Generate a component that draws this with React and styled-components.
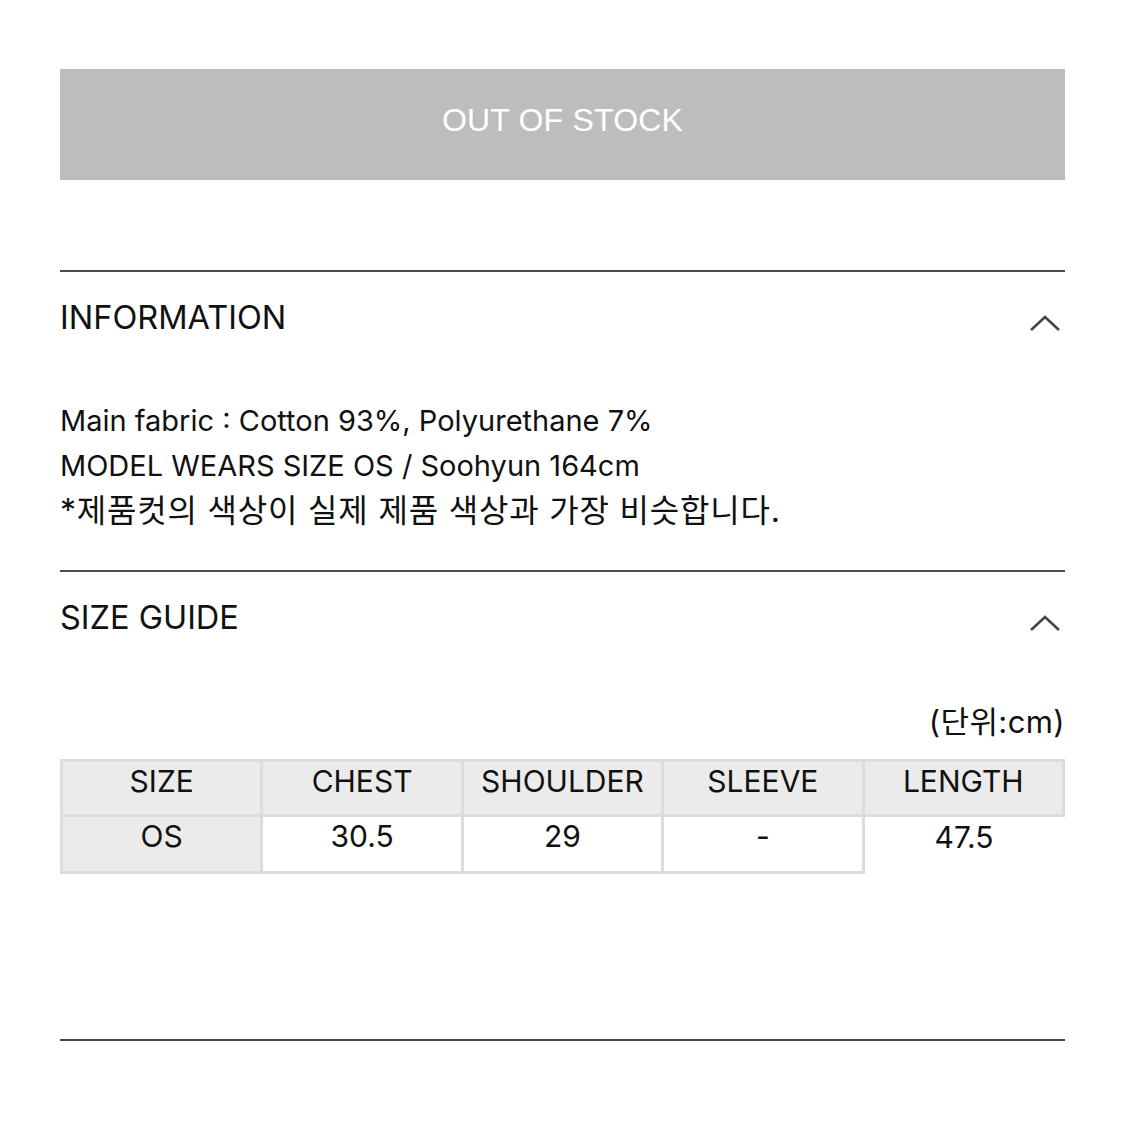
import styled, { createGlobalStyle } from 'styled-components';

const GlobalStyle = createGlobalStyle`
  body {
    margin: 0;
    background: #ffffff;
    font-family: Inter, "Noto Sans CJK KR", sans-serif;
    color: #111111;
  }
`;

const Page = styled.div`
  padding: 69px 60px 60px;
  display: flex;
  flex-direction: column;
`;

const SoldOutButton = styled.button`
  height: 111px;
  padding: 0 0 8px;
  border: none;
  background: #bdbdbd;
  color: #ffffff;
  font-family: "Liberation Sans", Arial, sans-serif;
  font-size: 32px;
  letter-spacing: 0.2px;
  cursor: default;
  margin-bottom: 90px;
`;

const Section = styled.section`
  border-top: 2px solid #4b4b4b;
  padding-top: 26px;
  padding-bottom: ${(p) => p.$bottom || 0}px;
`;

const SectionHead = styled.div`
  display: flex;
  align-items: center;
  justify-content: space-between;
  height: 40px;
`;

const Title = styled.h2`
  margin: 0;
  font-size: 32.5px;
  font-weight: 400;
  line-height: 40px;
  color: #111;
`;

const Chevron = styled.svg`
  width: 32px;
  height: 18px;
  margin-top: 10px;
  margin-right: 4px;
`;

const Info = styled.div`
  margin-top: 60px;
  font-size: 29px;
  line-height: 45px;
  color: #111;
`;

const Korean = styled.span`
  font-size: ${(p) => p.$size || 32}px;
  letter-spacing: ${(p) => p.$spacing ?? 0.8}px;
`;

const Unit = styled.div`
  margin-top: 64px;
  text-align: right;
  font-size: 28px;
  line-height: 40px;
  margin-bottom: 16px;
`;

const SizeTable = styled.table`
  width: 100%;
  table-layout: fixed;
  border-collapse: collapse;
`;

const Cell = styled.td`
  padding: ${(p) => (p.$head ? '1px 0 15px' : '1px 0 17px')};
  line-height: 36px;
  text-align: center;
  vertical-align: middle;
  font-size: 30px;
  font-weight: 400;
  color: #111;
  background: ${(p) => (p.$gray ? '#ebebeb' : '#ffffff')};
  border: ${(p) => (p.$plain ? 'none' : '3px solid #dcdcdc')};
`;

const BottomRule = styled.div`
  margin-top: 165px;
  border-top: 2px solid #4b4b4b;
`;

const ChevronUp = () => (
  <Chevron viewBox="0 0 32 18" fill="none">
    <polyline points="2,16 16,3 30,16" stroke="#444" strokeWidth="2.6" />
  </Chevron>
);

const heads = ['SIZE', 'CHEST', 'SHOULDER', 'SLEEVE', 'LENGTH'];
const values = ['OS', '30.5', '29', '-', '47.5'];

export default function App() {
  return (
    <>
      <GlobalStyle />
      <Page>
        <SoldOutButton>OUT OF STOCK</SoldOutButton>

        <Section $bottom={36}>
          <SectionHead>
            <Title>INFORMATION</Title>
            <ChevronUp />
          </SectionHead>
          <Info>
            <div>Main fabric : Cotton 93%, Polyurethane 7%</div>
            <div>MODEL WEARS SIZE OS / Soohyun 164cm</div>
            <div>
              <Korean>*제품컷의 색상이 실제 제품 색상과 가장 비슷합니다.</Korean>
            </div>
          </Info>
        </Section>

        <Section>
          <SectionHead>
            <Title>SIZE GUIDE</Title>
            <ChevronUp />
          </SectionHead>
          <Unit>
            <Korean $size={31} $spacing={0.4}>(단위:cm)</Korean>
          </Unit>
          <SizeTable>
            <tbody>
              <tr>
                {heads.map((h) => (
                  <Cell as="th" key={h} $head $gray>
                    {h}
                  </Cell>
                ))}
              </tr>
              <tr>
                {values.map((v, i) => (
                  <Cell key={i} $gray={i === 0} $plain={i === values.length - 1}>
                    {v}
                  </Cell>
                ))}
              </tr>
            </tbody>
          </SizeTable>
        </Section>

        <BottomRule />
      </Page>
    </>
  );
}
